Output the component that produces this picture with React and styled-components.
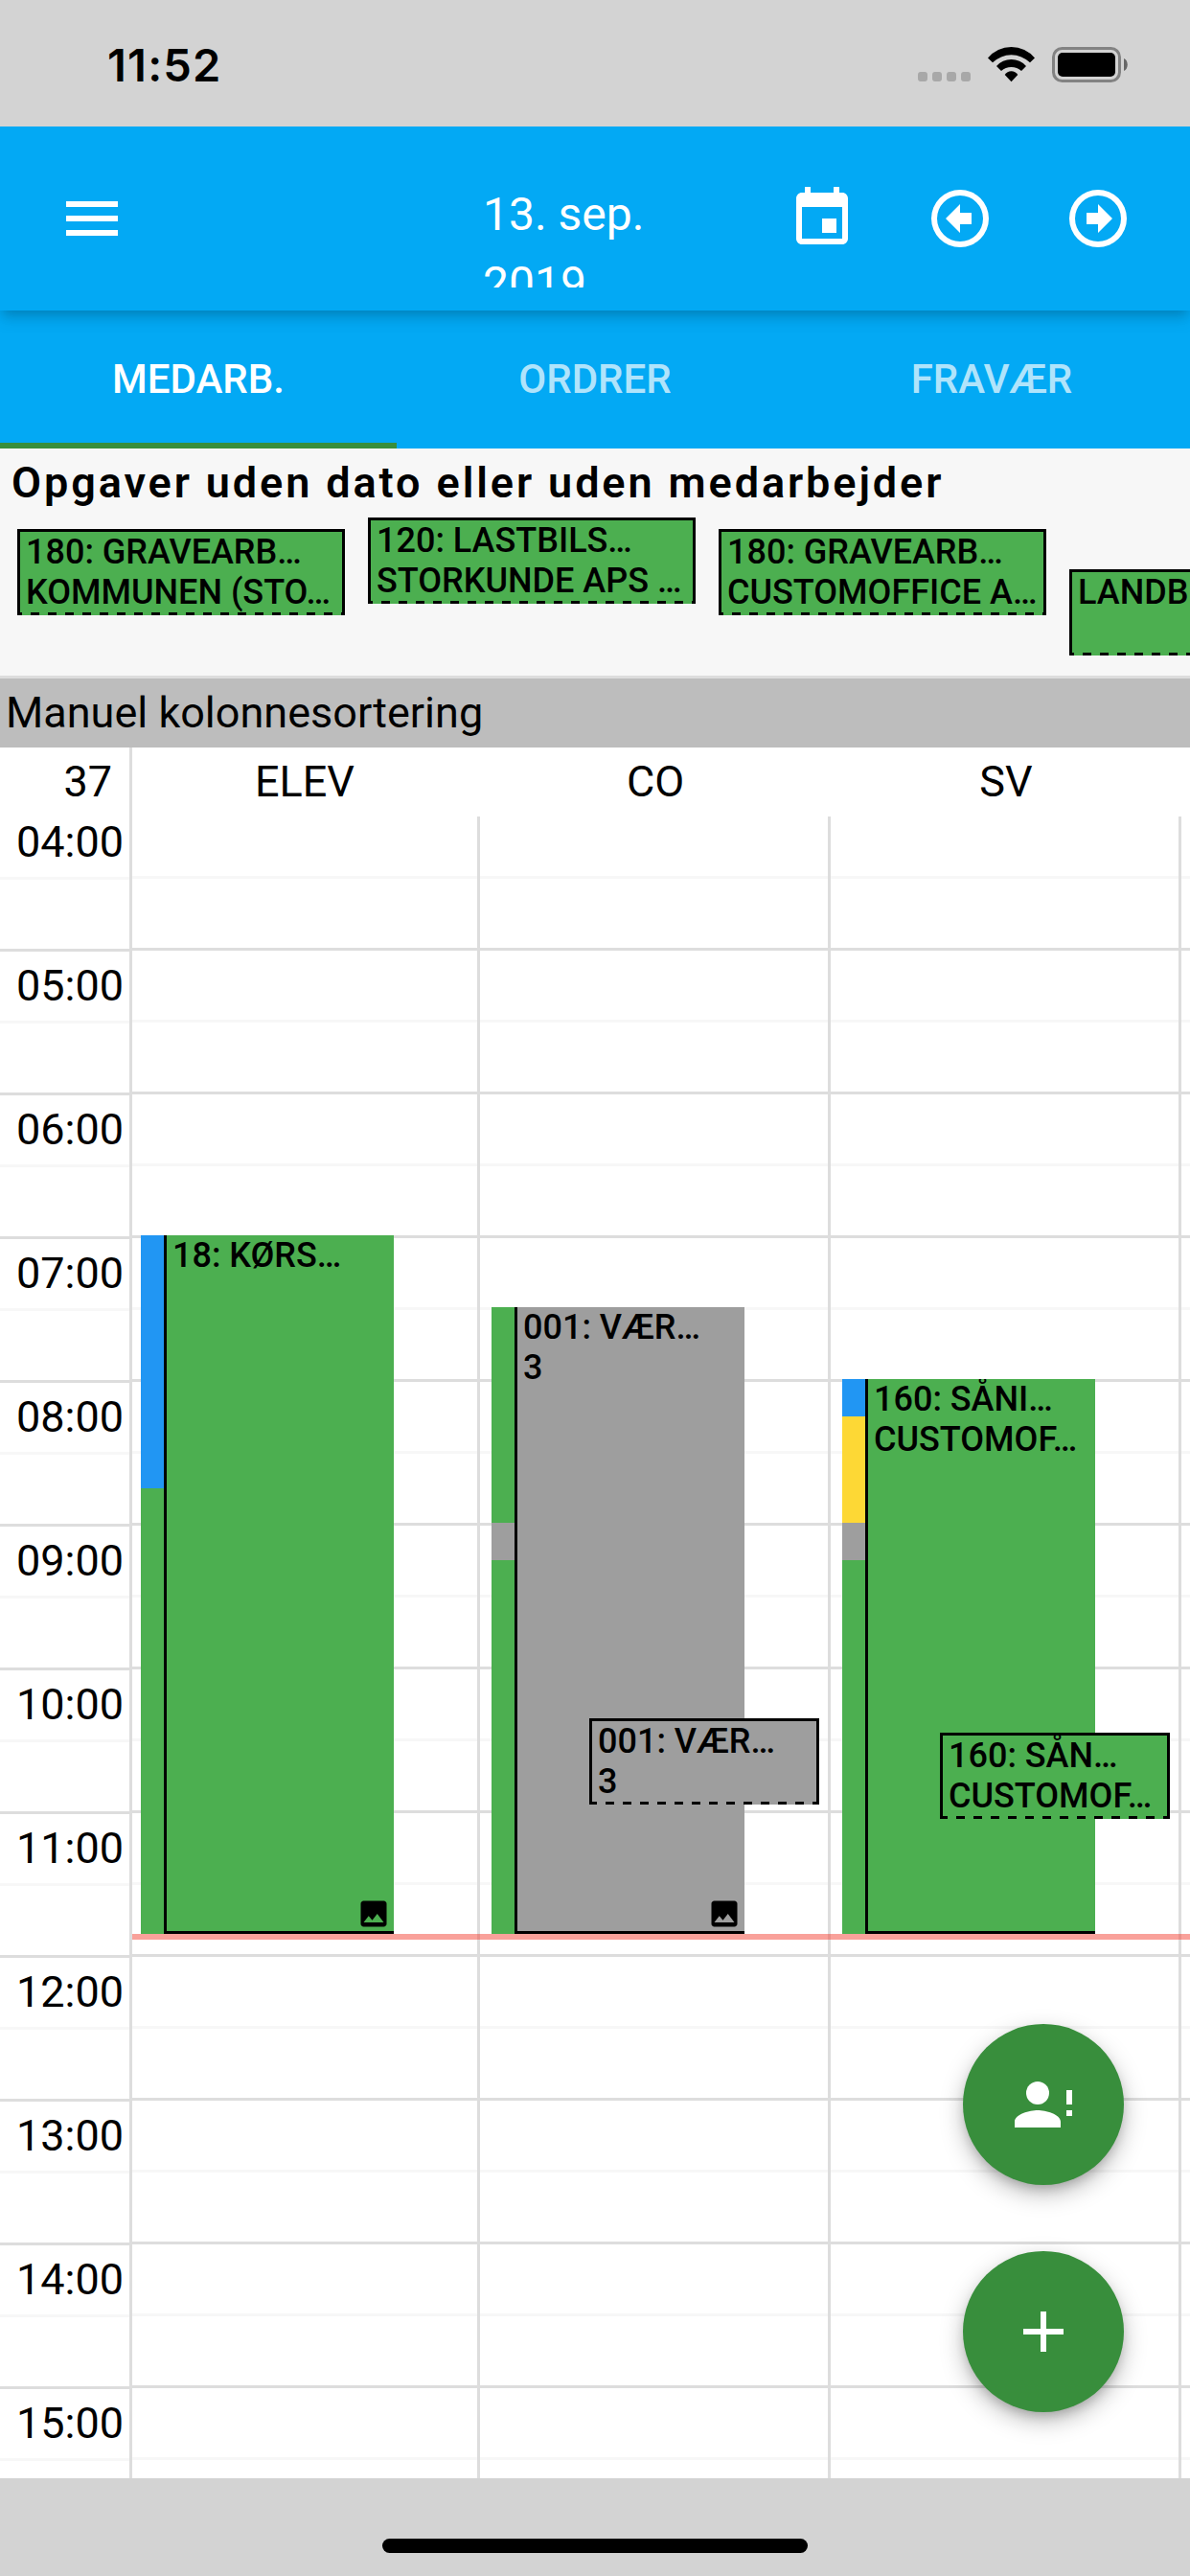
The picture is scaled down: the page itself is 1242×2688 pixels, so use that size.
import React from "react";
import styled, { createGlobalStyle } from "styled-components";

const GlobalStyle = createGlobalStyle`
  * {
    box-sizing: border-box;
  }

  body {
    margin: 0;
    font-family: Roboto, "Liberation Sans", sans-serif;
    color: #000;
    background: #fff;
  }
`;

const colors = {
  primary: "#03a9f4",
  accent: "#388e3c",
  green: "#4caf50",
  grey: "#9e9e9e",
  blue: "#2196f3",
  yellow: "#fdd835",
  line: "#ddd",
  lightLine: "#f7f7f7",
};

const HOUR = 150;
const HOURS = [4, 5, 6, 7, 8, 9, 10, 11, 12, 13, 14, 15];

const Screen = styled.div`
  width: 1242px;
  height: 2688px;
  display: flex;
  flex-direction: column;
  overflow: hidden;
`;

const StatusBar = styled.div`
  flex: none;
  height: 132px;
  padding: 37px 65px 0 112px;
  display: flex;
  justify-content: space-between;
  align-items: flex-start;
  background: #d3d3d3;
  z-index: 2;
`;

const Clock = styled.span`
  font-family: Inter, sans-serif;
  font-weight: 600;
  font-size: 47px;
  line-height: 62px;
  letter-spacing: 1.2px;
`;

const StatusIcons = styled.svg`
  width: 220px;
  height: 38px;
  margin-top: 11px;
`;

const Toolbar = styled.header`
  flex: none;
  height: 192px;
  padding: 0 60px;
  display: flex;
  align-items: center;
  color: #fff;
  background: ${colors.primary};
  box-shadow: 0 6px 12px -3px rgba(0, 0, 0, 0.2),
    0 12px 15px 0 rgba(0, 0, 0, 0.07);
  z-index: 1;
`;

const Icon = styled.svg`
  flex: none;
  width: ${(props) => props.$size || 72}px;
  height: ${(props) => props.$size || 72}px;
  fill: currentColor;
`;

const DateLabel = styled.div`
  width: 246px;
  height: 120px;
  margin: 24px 0 0 372px;
  padding-top: 8px;
  overflow: hidden;
  font-size: 48px;
  line-height: 72px;
`;

const Actions = styled.div`
  margin-left: auto;
  display: flex;
  gap: 72px;
`;

const Tabs = styled.nav`
  flex: none;
  height: 144px;
  display: grid;
  grid-template-columns: repeat(3, 1fr);
  background: ${colors.primary};
`;

const Tab = styled.div`
  display: flex;
  align-items: center;
  justify-content: center;
  border-bottom: 6px solid
    ${(props) => (props.$active ? colors.accent : "transparent")};
  padding-top: 4px;
  font-size: 42px;
  font-weight: 500;
  color: ${(props) => (props.$active ? "#fff" : "rgba(255, 255, 255, 0.7)")};
`;

const Unplanned = styled.section`
  flex: none;
  height: 240px;
  border-bottom: 3px solid ${colors.line};
  background: #f7f7f7;
`;

const UnplannedTitle = styled.h2`
  margin: 0;
  padding: 0 12px;
  height: 72px;
  font-size: 45px;
  line-height: 72px;
  font-weight: 600;
  letter-spacing: 2.9px;
  white-space: nowrap;
`;

const UnplannedList = styled.div`
  display: flex;
  align-items: flex-start;
  gap: 24px;
  padding-left: 18px;
`;

const Card = styled.div`
  flex: none;
  width: ${(props) => props.$width}px;
  height: 90px;
  margin-top: ${(props) => props.$offset || 0}px;
  padding-left: 6px;
  overflow: hidden;
  border: 3px solid #000;
  border-bottom: 0;
  background: repeat-x center bottom / 18px 3px
      linear-gradient(
        90deg,
        #000 5px,
        transparent 5px,
        transparent 14px,
        #000 14px
      )
    ${(props) => props.$color};
  font-size: 36px;
  line-height: 42px;
  font-weight: 500;
  white-space: nowrap;
`;

const SortBar = styled.div`
  flex: none;
  height: 72px;
  padding-left: 6px;
  background: #bdbdbd;
  font-size: 45px;
  line-height: 72px;
`;

const ColumnHeader = styled.div`
  flex: none;
  height: 72px;
  display: grid;
  grid-template-columns: 138px 363px 366px 366px 9px;
  font-size: 45px;
  line-height: 72px;
  text-align: center;
`;

const WeekNumber = styled.div`
  padding-right: 18px;
  border-right: 3px solid ${colors.line};
  text-align: right;
`;

const Employee = styled.div`
  &:nth-child(2) {
    padding-right: 3px;
  }
`;

const Calendar = styled.main`
  position: relative;
  flex: none;
  height: 1734px;
  display: grid;
  grid-template-columns: 138px 363px 366px 366px 9px;
  overflow: hidden;
`;

const lines = (offset) => `
  repeating-linear-gradient(
    ${colors.line} 0 3px,
    transparent 3px 75px,
    ${colors.lightLine} 75px 78px,
    transparent 78px ${HOUR}px
  ) 0 ${offset}px / 100% 1950px
`;

const TimeAxis = styled.div`
  padding-right: 6px;
  border-right: 3px solid ${colors.line};
  background: ${lines(-12)};
`;

const Hour = styled.div`
  height: ${HOUR}px;
  font-size: 45px;
  line-height: 78px;
  text-align: right;

  &:first-child {
    margin-top: -12px;
  }
`;

const Column = styled.div`
  position: relative;
  border-right: ${(props) => (props.$last ? 0 : 3)}px solid ${colors.line};
  background: ${lines(-13)};
`;

const NowLine = styled.div`
  position: absolute;
  left: 138px;
  right: 0;
  top: 1166px;
  height: 6px;
  background: rgba(244, 67, 54, 0.5);
`;

const Task = styled.div`
  position: absolute;
  left: ${(props) => props.$left}px;
  top: ${(props) => props.$top}px;
  width: 264px;
  height: ${(props) => 1166 - props.$top}px;
  display: flex;
`;

const Strip = styled.div`
  width: 24px;
  display: flex;
  flex-direction: column;
`;

const StripPart = styled.div`
  ${(props) => (props.$height ? `height: ${props.$height}px` : "flex: 1")};
  background: ${(props) => props.$color};
`;

const TaskBody = styled.div`
  flex: 1;
  min-width: 0;
  display: flex;
  flex-direction: column;
  padding-left: 6px;
  overflow: hidden;
  border: solid #000;
  border-width: 0 0 3px 3px;
  background: ${(props) => props.$color};
  font-size: 36px;
  line-height: 42px;
  font-weight: 500;
  white-space: nowrap;

  svg {
    margin: auto 3px 0 auto;
  }
`;

const FloatingTask = styled.div`
  position: absolute;
  left: ${(props) => props.$left}px;
  top: ${(props) => props.$top}px;
`;

const FabStack = styled.div`
  position: absolute;
  right: 69px;
  bottom: 69px;
  display: flex;
  flex-direction: column;
  gap: 69px;
`;

const Fab = styled.button`
  width: 168px;
  height: 168px;
  padding: 0;
  display: flex;
  align-items: center;
  justify-content: center;
  border: 0;
  border-radius: 50%;
  color: #fff;
  background: ${colors.accent};
  box-shadow: 0 6px 12px -3px rgba(0, 0, 0, 0.2),
    0 9px 24px 0 rgba(0, 0, 0, 0.26);
`;

const HomeArea = styled.footer`
  flex: 1;
  padding-bottom: 24px;
  display: flex;
  align-items: flex-end;
  justify-content: center;
  background: #d3d3d3;
  z-index: 1;
`;

const HomeIndicator = styled.div`
  width: 444px;
  height: 15px;
  border-radius: 8px;
  background: #000;
`;

const RING =
  "M12 2a10 10 0 1 0 0 20a10 10 0 0 0 0-20zm0 18a8 8 0 1 1 0-16a8 8 0 0 1 0 16z";

const unplanned = [
  { lines: ["180: GRAVEARB…", "KOMMUNEN (STO…"], offset: 12 },
  { lines: ["120: LASTBILS…", "STORKUNDE APS …"], offset: 0 },
  { lines: ["180: GRAVEARB…", "CUSTOMOFFICE A…"], offset: 12 },
  { lines: ["LANDB"], offset: 54 },
];

const employees = [
  {
    name: "ELEV",
    task: {
      left: 9,
      top: 437,
      color: colors.green,
      lines: ["18: KØRS…"],
      hasImage: true,
      strip: [[colors.blue, 264], [colors.green]],
    },
  },
  {
    name: "CO",
    task: {
      left: 12,
      top: 512,
      color: colors.grey,
      lines: ["001: VÆR…", "3"],
      hasImage: true,
      strip: [[colors.green, 225], [colors.grey, 39], [colors.green]],
    },
    floating: {
      left: 114,
      top: 941,
      color: colors.grey,
      lines: ["001: VÆR…", "3"],
    },
  },
  {
    name: "SV",
    task: {
      left: 12,
      top: 587,
      color: colors.green,
      lines: ["160: SÅNI…", "CUSTOMOF…"],
      strip: [
        [colors.blue, 39],
        [colors.yellow, 111],
        [colors.grey, 39],
        [colors.green],
      ],
    },
    floating: {
      left: 114,
      top: 956,
      color: colors.green,
      lines: ["160: SÅN…", "CUSTOMOF…"],
    },
  },
];

const Lines = ({ lines }) => lines.map((line) => <div key={line}>{line}</div>);

const EmployeeColumn = ({ task, floating }) => (
  <Column>
    <Task $left={task.left} $top={task.top}>
      <Strip>
        {task.strip.map(([color, height], index) => (
          <StripPart key={index} $color={color} $height={height} />
        ))}
      </Strip>
      <TaskBody $color={task.color}>
        <Lines lines={task.lines} />
        {task.hasImage && (
          <Icon $size={36} viewBox="0 0 24 24">
            <path d="M21 19V5c0-1.1-.9-2-2-2H5c-1.1 0-2 .9-2 2v14c0 1.1.9 2 2 2h14c1.1 0 2-.9 2-2zM8.5 13.5l2.5 3.01L14.5 12l4.5 6H5l3.5-4.5z" />
          </Icon>
        )}
      </TaskBody>
    </Task>
    {floating && (
      <FloatingTask $left={floating.left} $top={floating.top}>
        <Card $width={240} $color={floating.color}>
          <Lines lines={floating.lines} />
        </Card>
      </FloatingTask>
    )}
  </Column>
);

const App = () => {
  return (
    <Screen>
      <GlobalStyle />
      <StatusBar>
        <Clock>11:52</Clock>
        <StatusIcons viewBox="957 48 220 38">
          {[958, 973, 988, 1003].map((x) => (
            <rect key={x} x={x} y="75" width="10" height="10" rx="3" fill="#a8a8a8" />
          ))}
          <path d="M1031 60.5a31.8 31.8 0 0 1 49 0l-5 4.8a27.8 27.8 0 0 0-39 0z" />
          <path d="M1040 69a20.7 20.7 0 0 1 31 0l-5 5a15.8 15.8 0 0 0-21 0z" />
          <path d="M1048.7 78a8 8 0 0 1 13.6 0l-6.8 7.2z" />
          <rect x="1099.5" y="50.5" width="69" height="34" rx="9" fill="none" stroke="#828282" strokeWidth="3" />
          <rect x="1104" y="55" width="60" height="25" rx="5" />
          <path d="M1173 61c5 2 5 11 0 13z" fill="#666" />
        </StatusIcons>
      </StatusBar>

      <Toolbar>
        <Icon viewBox="0 0 24 24">
          <path d="M3 18h18v-2H3v2zm0-5h18v-2H3v2zm0-7v2h18V6H3z" />
        </Icon>
        <DateLabel>13. sep. 2019</DateLabel>
        <Actions>
          <Icon viewBox="0 0 24 24">
            <path d="M17 12h-5v5h5v-5zM16 1v2H8V1H6v2H5c-1.11 0-1.99.9-1.99 2L3 19c0 1.1.89 2 2 2h14c1.1 0 2-.9 2-2V5c0-1.1-.9-2-2-2h-1V1h-2zm3 18H5V8h14v11z" />
          </Icon>
          <Icon viewBox="0 0 24 24">
            <path d={RING} />
            <path d="M7 12l5-5v3h4v4h-4v3z" />
          </Icon>
          <Icon viewBox="0 0 24 24">
            <path d={RING} />
            <path d="M17 12l-5-5v3H8v4h4v3z" />
          </Icon>
        </Actions>
      </Toolbar>

      <Tabs>
        <Tab $active>MEDARB.</Tab>
        <Tab>ORDRER</Tab>
        <Tab>FRAVÆR</Tab>
      </Tabs>

      <Unplanned>
        <UnplannedTitle>Opgaver uden dato eller uden medarbejder</UnplannedTitle>
        <UnplannedList>
          {unplanned.map((task, index) => (
            <Card key={index} $width={342} $offset={task.offset} $color={colors.green}>
              <Lines lines={task.lines} />
            </Card>
          ))}
        </UnplannedList>
      </Unplanned>

      <SortBar>Manuel kolonnesortering</SortBar>

      <ColumnHeader>
        <WeekNumber>37</WeekNumber>
        {employees.map(({ name }) => (
          <Employee key={name}>{name}</Employee>
        ))}
      </ColumnHeader>

      <Calendar>
        <TimeAxis>
          {HOURS.map((hour) => (
            <Hour key={hour}>{String(hour).padStart(2, "0")}:00</Hour>
          ))}
        </TimeAxis>
        {employees.map((employee) => (
          <EmployeeColumn key={employee.name} {...employee} />
        ))}
        <Column $last />
        <NowLine />
        <FabStack>
          <Fab>
            <Icon viewBox="0 0 24 24">
              <circle cx="10" cy="8" r="4" />
              <path d="M10 14c-2.67 0-8 1.34-8 4v2h16v-2c0-2.66-5.33-4-8-4zM20 7h2v5h-2zM20 14h2v2h-2z" />
            </Icon>
          </Fab>
          <Fab>
            <Icon viewBox="0 0 24 24">
              <path d="M19 13h-6v6h-2v-6H5v-2h6V5h2v6h6v2z" />
            </Icon>
          </Fab>
        </FabStack>
      </Calendar>

      <HomeArea>
        <HomeIndicator />
      </HomeArea>
    </Screen>
  );
};

export default App;
